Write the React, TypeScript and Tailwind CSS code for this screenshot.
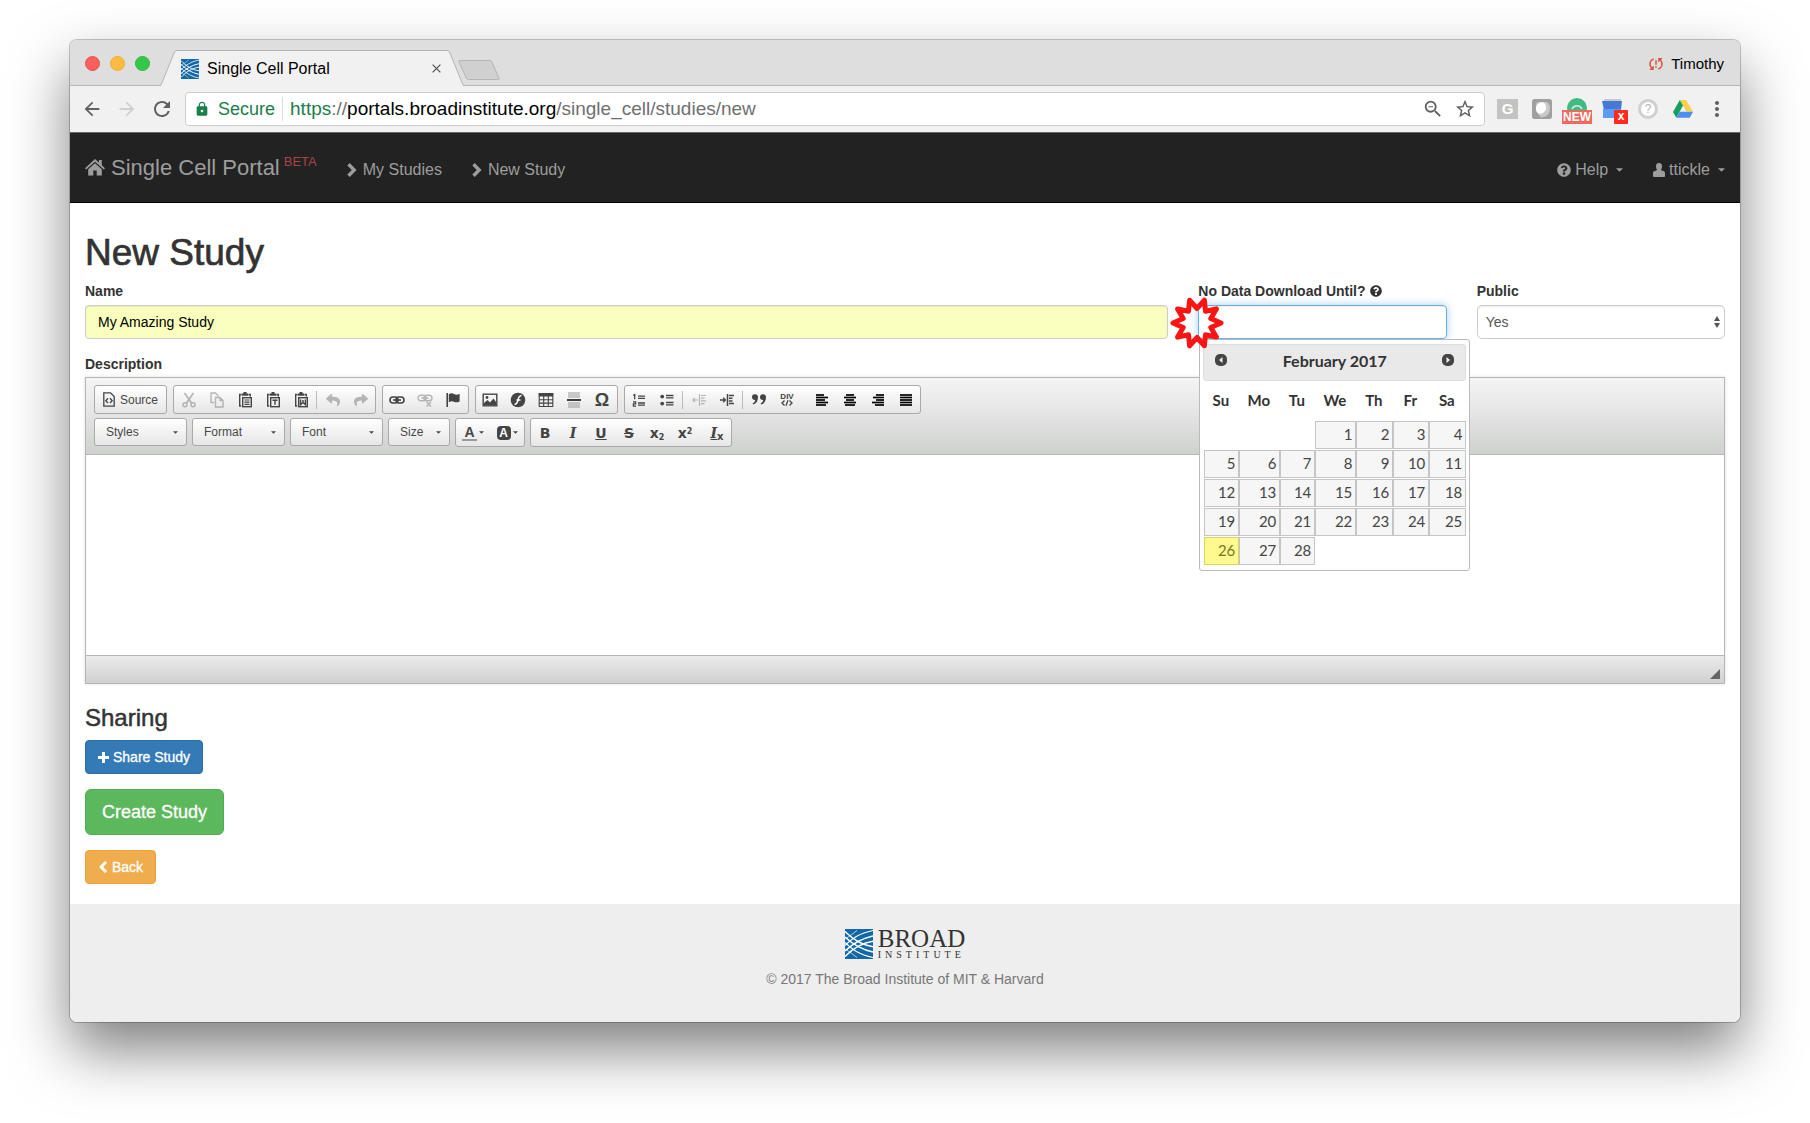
import React from "react";
import {
  MdArrowBack,
  MdArrowForward,
  MdRefresh,
  MdLock,
  MdZoomOut,
  MdStarBorder,
  MdMoreVert,
  MdSyncProblem,
} from "react-icons/md";
import { FaQuestionCircle, FaReply, FaShare } from "react-icons/fa";

/* ---------- logo and small drawings ---------- */

function BroadMark({ className }: { className: string }) {
  const fan = (
    <g fill="none" stroke="#fff" strokeLinecap="butt">
      <path d="M0 10 C5 7 8 4.5 12 1.5" strokeWidth="0.7" />
      <path d="M0 16.5 C7 9.5 14 4.5 28 1.5" strokeWidth="1.2" />
      <path d="M0 22 C8 14.5 16 9.5 28 7" strokeWidth="1.5" />
      <path d="M0 27.5 C8 19.5 16 14 28 12.3" strokeWidth="1.4" />
    </g>
  );
  return (
    <svg viewBox="0 0 28 30" preserveAspectRatio="none" className={className} aria-hidden="true">
      <rect width="28" height="30" fill="#1267a8" />
      {fan}
      <g transform="translate(0 30) scale(1 -1)">{fan}</g>
    </svg>
  );
}

function HomeIcon() {
  return (
    <svg viewBox="0 0 20 17" className="h-[17px] w-5" fill="currentColor" aria-hidden="true">
      <path d="M10 0 L0 9.2 L1.2 10.6 L10 2.8 L18.8 10.6 L20 9.2 L16.8 6.2 V1 H14 V3.6 Z" />
      <path d="M10 4.2 L3.2 10.2 V16.5 H8.3 V11.5 H11.7 V16.5 H16.8 V10.2 Z" />
    </svg>
  );
}

function UserIcon() {
  return (
    <svg viewBox="0 0 12 14" className="h-3.5 w-3" fill="currentColor" aria-hidden="true">
      <path d="M6 0 C8.2 0 9.2 1.6 9 3.8 C8.9 5.4 8.4 6.4 7.8 7 L10.8 8.2 C11.7 8.6 12 9.4 12 10.4 V12.8 C12 13.6 11.7 14 11 14 H1 C.3 14 0 13.6 0 12.8 V10.4 C0 9.4 .3 8.6 1.2 8.2 L4.2 7 C3.6 6.4 3.1 5.4 3 3.8 C2.8 1.6 3.8 0 6 0 Z" />
    </svg>
  );
}

function Chevron({ className, left = false }: { className: string; left?: boolean }) {
  return (
    <svg viewBox="0 0 10 14" className={className} fill="none" stroke="currentColor" strokeWidth="3.4" aria-hidden="true">
      <path d={left ? "M8.5 1.2 L2.8 7 L8.5 12.8" : "M1.5 1.2 L7.2 7 L1.5 12.8"} />
    </svg>
  );
}

function Caret({ className }: { className: string }) {
  return (
    <svg viewBox="0 0 8 4" className={className} fill="currentColor" aria-hidden="true">
      <path d="M0 0 H8 L4 4 Z" />
    </svg>
  );
}

const burst = Array.from({ length: 20 }, (_, i) => {
  const r = i % 2 === 0 ? 24 : 14.5;
  const a = (i * Math.PI) / 10;
  return `${(27 + r * Math.cos(a)).toFixed(1)},${(27 + r * Math.sin(a)).toFixed(1)}`;
}).join(" ");

/* ---------- browser chrome ---------- */

function TabStrip() {
  return (
    <div className="flex h-[46px] items-end border-b border-[#b9b9b9] bg-[#dedede] pr-4 pl-[15px]">
      <div className="flex gap-2.5 pb-3.5">
        <button aria-label="Close window" className="size-[15px] rounded-full border border-[#e9524c] bg-[#fc605c]" />
        <button aria-label="Minimise window" className="size-[15px] rounded-full border border-[#eeae35] bg-[#fdbc40]" />
        <button aria-label="Zoom window" className="size-[15px] rounded-full border border-[#2bb93d] bg-[#34c84a]" />
      </div>
      <div className="-mb-px ml-2.5 flex h-9 items-stretch">
        <svg viewBox="0 0 17 36" className="h-9 w-[17px]" aria-hidden="true">
          <path d="M0 36 L1 35.5 L14.5 2 Q15.3 .5 17 .5 V36 Z" fill="#f1f1f1" />
          <path d="M0 35.5 L1 35 L14.5 2 Q15.3 .5 17 .5" fill="none" stroke="#b4b4b4" />
        </svg>
        <div className="flex w-[270px] items-center border-t border-[#b4b4b4] bg-[#f1f1f1] pr-1.5 pl-1">
          <BroadMark className="h-5 w-[18px]" />
          <span className="ml-2 flex-1 text-base text-black">Single Cell Portal</span>
          <button aria-label="Close tab">
            <svg viewBox="0 0 10 10" className="size-[9px]" stroke="#555" strokeWidth="1.4" aria-hidden="true">
              <path d="M.7 .7 L9.3 9.3 M9.3 .7 L.7 9.3" />
            </svg>
          </button>
        </div>
        <svg viewBox="0 0 17 36" className="h-9 w-[17px]" aria-hidden="true">
          <path d="M17 36 L16 35.5 L2.5 2 Q1.7 .5 0 .5 V36 Z" fill="#f1f1f1" />
          <path d="M17 35.5 L16 35 L2.5 2 Q1.7 .5 0 .5" fill="none" stroke="#b4b4b4" />
        </svg>
      </div>
      <button aria-label="New tab" className="-ml-1.5 pb-[5px]">
        <svg viewBox="0 0 42 20" className="h-5 w-[42px]" aria-hidden="true">
          <path d="M2 .5 H32 Q33.5 .5 34 2 L41 18 Q41.5 19.5 40 19.5 H10.5 Q9 19.5 8.3 18 L1 2 Q.7 .5 2 .5 Z" fill="#d0d0d0" stroke="#b4b4b4" />
        </svg>
      </button>
      <button className="mb-2.5 ml-auto flex items-center gap-1.5 text-[15px] text-black">
        <MdSyncProblem className="size-[18px] text-[#d9533f]" />
        Timothy
      </button>
    </div>
  );
}

function Extensions() {
  return (
    <div className="ml-3 flex items-center">
      <button aria-label="G extension" className="flex h-5 w-[21px] items-center justify-center bg-[#c3c3c3] text-[15px] leading-5 font-bold text-white">
        G
      </button>
      <button aria-label="Shape extension" className="ml-3.5">
        <svg viewBox="0 0 20 20" className="size-5" aria-hidden="true">
          <rect width="20" height="20" rx="2.5" fill="#a0a0a0" />
          <path d="M4 6 Q4 3 7 3 H14 Q18 4 18 9 Q18 18 9 18.5 Q4 13 4 6 Z" fill="#c9c9c9" />
          <ellipse cx="9" cy="9" rx="5" ry="6" transform="rotate(25 9 9)" fill="#fff" />
        </svg>
      </button>
      <button aria-label="New extension" className="relative ml-2.5 h-6 w-[30px]">
        <svg viewBox="0 0 30 24" className="absolute top-0 left-0 h-6 w-[30px]" aria-hidden="true">
          <circle cx="15" cy="11" r="10" fill="#41bb86" />
          <path d="M10 12 A5.5 5.5 0 0 1 20 12" fill="none" stroke="#c9f0de" strokeWidth="1.6" />
        </svg>
        <span className="absolute bottom-[-3px] left-0 h-3.5 w-[30px] bg-[#ee6a5f] text-center text-[12px] leading-[14px] font-bold text-white">
          NEW
        </span>
      </button>
      <button aria-label="Mail extension" className="relative ml-2.5 h-6 w-[26px]">
        <svg viewBox="0 0 26 24" className="h-6 w-[26px]" aria-hidden="true">
          <path d="M2 2 H19 V5 H2 Z" fill="#c9c9c9" />
          <path d="M0 4 H20 L19 13 H2 Z" fill="#4679d6" />
          <path d="M1 12 H19 V21 H1 Z" fill="#5c9cf5" />
        </svg>
        <span className="absolute right-0 bottom-[-3px] size-3.5 rounded-[1px] bg-[#ff2a1c] text-center text-[12px] leading-3 font-bold text-white">
          x
        </span>
      </button>
      <button aria-label="Help extension" className="ml-2.5 flex size-5 items-center justify-center rounded-full border-[3px] border-[#cfcfcf] bg-white text-[12px] leading-3 text-[#b5b5b5]">
        ?
      </button>
      <button aria-label="Drive" className="ml-[15px]">
        <svg viewBox="0 0 20 18" className="h-[18px] w-5" aria-hidden="true">
          <path d="M6.8 0 H13.2 L20 11.8 H13.5 Z" fill="#fcd04b" />
          <path d="M6.8 0 L10 5.6 L3.3 17.8 L0 12 Z" fill="#12a05d" />
          <path d="M6.7 11.8 H20 L16.8 17.8 H3.3 Z" fill="#4e8df5" />
        </svg>
      </button>
      <button aria-label="Menu" className="ml-3">
        <MdMoreVert className="size-6 text-[#5f5f5f]" />
      </button>
    </div>
  );
}

function Toolbar() {
  return (
    <div className="flex h-[46px] items-center bg-[#f1f1f1] pr-[11px] pl-[11px]">
      <button aria-label="Back">
        <MdArrowBack className="size-[22px] text-[#606060]" />
      </button>
      <button aria-label="Forward" className="ml-[13px]">
        <MdArrowForward className="size-[22px] text-[#cfcfcf]" />
      </button>
      <button aria-label="Reload" className="ml-3">
        <MdRefresh className="size-6 text-[#606060]" />
      </button>
      <div className="ml-[11px] flex h-[34px] flex-1 items-center rounded-sm border border-[#cdcdcd] bg-white px-2">
        <MdLock className="size-4 text-[#188048]" />
        <span className="ml-2 text-lg text-[#188048]">Secure</span>
        <span className="mx-[7px] h-6 w-px bg-[#dcdcdc]" />
        <span className="flex-1 text-[19px] leading-6 text-[#6f6f6f]">
          <span className="text-[#188048]">https</span>://<span className="text-black">portals.broadinstitute.org</span>
          /single_cell/studies/new
        </span>
        <button aria-label="Zoom out">
          <MdZoomOut className="size-[22px] text-[#606060]" />
        </button>
        <button aria-label="Bookmark" className="ml-2.5">
          <MdStarBorder className="size-[22px] text-[#606060]" />
        </button>
      </div>
      <Extensions />
    </div>
  );
}

function Navbar() {
  return (
    <nav className="flex h-[71px] items-center border-y border-t-[#6a6a6a] border-b-black bg-[#222] px-[15px] pt-1 text-base text-[#9d9d9d]">
      <a href="#home" className="mb-1 flex items-center text-[22px] leading-7">
        <HomeIcon />
        <span className="ml-1.5">
          Single Cell Portal
          <sup className="top-[-9px] ml-1 text-[13px] text-[#a94442]">BETA</sup>
        </span>
      </a>
      <a href="#studies" className="ml-[30px] flex items-center gap-1.5">
        <Chevron className="h-3.5 w-2.5" />
        My Studies
      </a>
      <a href="#new" className="ml-[30px] flex items-center gap-1.5">
        <Chevron className="h-3.5 w-2.5" />
        New Study
      </a>
      <button className="ml-auto flex items-center">
        <FaQuestionCircle className="size-3.5" />
        <span className="mr-2 ml-1">Help</span>
        <Caret className="h-1 w-[7px]" />
      </button>
      <button className="ml-[30px] flex items-center">
        <UserIcon />
        <span className="mr-2 ml-1">ttickle</span>
        <Caret className="h-1 w-[7px]" />
      </button>
    </nav>
  );
}

/* ---------- date picker ---------- */

const weeks: (number | null)[][] = [
  [null, null, null, 1, 2, 3, 4],
  [5, 6, 7, 8, 9, 10, 11],
  [12, 13, 14, 15, 16, 17, 18],
  [19, 20, 21, 22, 23, 24, 25],
  [26, 27, 28, null, null, null, null],
];
const dayNames = ["Su", "Mo", "Tu", "We", "Th", "Fr", "Sa"];

function Arrow({ path, label }: { path: string; label: string }) {
  return (
    <button type="button" aria-label={label} className="-mt-0.5">
      <svg viewBox="0 0 12 12" className="size-3" aria-hidden="true">
        <rect width="12" height="12" rx="5" fill="#444" />
        <path d={path} fill="#eee" />
      </svg>
    </button>
  );
}

function DatePicker() {
  return (
    <div className="absolute top-full left-px z-10 w-[271px] rounded-[3px] border border-[#bbb] bg-white px-[3px] pt-1 pb-1 font-['Lato',sans-serif] text-[#333]">
      <div className="flex h-[37px] items-center justify-between rounded-[3px] border border-[#ddd] bg-[#e9e9e9] px-[11px] pb-[3px]">
        <Arrow label="Previous month" path="M7.5 3 V9 L4 6 Z" />
        <span className="text-base font-bold">February 2017</span>
        <Arrow label="Next month" path="M4.5 3 V9 L8 6 Z" />
      </div>
      <table className="ml-px w-[262px] table-fixed border-separate border-spacing-0 text-[15px]">
        <colgroup>
          <col className="w-[35px]" />
          <col className="w-[41px]" />
          <col className="w-[35px]" />
          <col className="w-[41px]" />
          <col className="w-[37px]" />
          <col className="w-9" />
          <col className="w-[37px]" />
        </colgroup>
        <thead>
          <tr className="h-10">
            {dayNames.map((d) => (
              <th key={d} scope="col" className="p-0 pr-0.5 font-bold">
                {d}
              </th>
            ))}
          </tr>
        </thead>
        <tbody>
          {weeks.map((w, i) => (
            <tr key={i}>
              {w.map((d, j) => (
                <td key={j} className="p-0 pb-px">
                  {d !== null && (
                    <button
                      type="button"
                      className={
                        d === 26
                          ? "block h-7 w-full border border-[#dad55e] bg-[#fffa90] pr-[3px] text-right text-[#777620]"
                          : "block h-7 w-full border border-[#c5c5c5] bg-[#f6f6f6] pr-[3px] text-right text-[#454545]"
                      }
                    >
                      {d}
                    </button>
                  )}
                </td>
              ))}
            </tr>
          ))}
        </tbody>
      </table>
    </div>
  );
}

/* ---------- rich text editor ---------- */

function Group({ children, className = "" }: { children: React.ReactNode; className?: string }) {
  return (
    <div className={"flex h-[29px] items-center rounded-[3px] border border-[#a9a9a9] bg-linear-to-b from-white to-[#e6e6e6] " + className}>
      {children}
    </div>
  );
}

function Tool({ label, off = false, children }: { label: string; off?: boolean; children: React.ReactNode }) {
  return (
    <button
      type="button"
      aria-label={label}
      disabled={off}
      className={"flex h-full w-7 items-center justify-center text-[#444] " + (off ? "opacity-35" : "")}
    >
      {children}
    </button>
  );
}

function Glyph({ children }: { children: React.ReactNode }) {
  return (
    <svg viewBox="0 0 16 16" className="size-4" fill="none" stroke="currentColor" strokeWidth="1.4" aria-hidden="true">
      {children}
    </svg>
  );
}

function Separator() {
  return <span className="mx-px h-[18px] w-0.5 border-l border-[#bbb]" />;
}

function Clipboard({ children }: { children: React.ReactNode }) {
  return (
    <Glyph>
      <path d="M4 2.5 H2.7 V14 H4.2 M12 2.5 H13.3 V4.5" />
      <path d="M4.5 1.5 H6.5 V0 H9.5 V1.5 H11.5 V3.8 H4.5 Z" fill="currentColor" stroke="none" />
      {children}
    </Glyph>
  );
}

function Lines({ rows }: { rows: [number, number][] }) {
  return (
    <svg viewBox="0 0 14 12" className="h-3 w-3.5 text-black" stroke="currentColor" strokeWidth="1.7" aria-hidden="true">
      {rows.map(([a, b], i) => (
        <path key={i} d={`M${a} ${1 + i * 2.5} H${b}`} />
      ))}
    </svg>
  );
}

function Combo({ label, className }: { label: string; className: string }) {
  return (
    <button
      type="button"
      className={"flex h-7 items-center justify-between rounded-[3px] border border-[#a9a9a9] bg-linear-to-b from-white to-[#e6e6e6] pr-2 pl-[11px] text-xs text-[#474747] " + className}
    >
      {label}
      <Caret className="h-[3px] w-[5px]" />
    </button>
  );
}

function Editor() {
  return (
    <div className="border border-[#b6b6b6] shadow-[0_0_3px_rgba(0,0,0,0.15)]">
      <div className="flex flex-col gap-1 border-b border-[#b6b6b6] bg-linear-to-b from-[#f5f5f5] to-[#cfd1cf] px-2 py-[7px]">
        <div className="flex flex-wrap gap-1.5">
          <Group>
            <button type="button" className="flex h-full items-center gap-[5px] px-2 text-xs text-[#474747]">
              <svg viewBox="0 0 12 15" className="h-[15px] w-3" fill="none" stroke="#444" strokeWidth="1.3" aria-hidden="true">
                <path d="M.8 .8 H7.5 L11.2 4.5 V14.2 H.8 Z" />
                <path d="M5 6.3 L2.8 8.7 L5 11 M7 6.3 L9.2 8.7 L7 11" />
              </svg>
              Source
            </button>
          </Group>
          <Group className="pl-px">
            <Tool label="Cut" off>
              <Glyph>
                <path d="M3.5 1 L10.5 11 M12.5 1 L5.5 11" strokeWidth="1.8" />
                <circle cx="4" cy="12.7" r="2" />
                <circle cx="12" cy="12.7" r="2" />
              </Glyph>
            </Tool>
            <Tool label="Copy" off>
              <Glyph>
                <path d="M5 10.5 H2 V1 H6.5 L9 3.5 V5" />
                <path d="M6.5 5.5 H11 L14 8.5 V15 H6.5 Z M11 5.5 V8.5 H14" />
              </Glyph>
            </Tool>
            <Tool label="Paste">
              <Clipboard>
                <rect x="5.7" y="5.7" width="8.6" height="9" />
                <path d="M7.5 8 H12.5 M7.5 10.2 H12.5 M7.5 12.4 H12.5" strokeWidth="1.2" />
              </Clipboard>
            </Tool>
            <Tool label="Paste as plain text">
              <Clipboard>
                <rect x="5.7" y="5.7" width="8.6" height="9" />
                <path d="M7.5 8.2 H12.5 M10 8.2 V12.8" />
              </Clipboard>
            </Tool>
            <Tool label="Paste from Word">
              <Clipboard>
                <rect x="5.7" y="5.7" width="8.6" height="9" />
                <path d="M7.6 7.5 V12.6 L10 10.5 L12.4 12.6 V7.5 M10 8 V10.5" />
              </Clipboard>
            </Tool>
            <Separator />
            <Tool label="Undo" off>
              <FaReply className="size-3.5" />
            </Tool>
            <Tool label="Redo" off>
              <FaShare className="size-3.5" />
            </Tool>
          </Group>
          <Group className="pr-px">
            <Tool label="Link">
              <Glyph>
                <rect x="1" y="5" width="8" height="6" rx="3" strokeWidth="1.6" />
                <rect x="7" y="5" width="8" height="6" rx="3" strokeWidth="1.6" />
                <path d="M4 8 H12" strokeWidth="1.6" />
              </Glyph>
            </Tool>
            <Tool label="Unlink" off>
              <Glyph>
                <rect x="1" y="3.2" width="8" height="5.6" rx="2.8" />
                <rect x="7" y="3.2" width="8" height="5.6" rx="2.8" />
                <path d="M4.5 6 H11.5 M9.5 10 L14 14.5 M14 10 L9.5 14.5" />
              </Glyph>
            </Tool>
            <Tool label="Anchor">
              <Glyph>
                <path d="M2.2 1 V15" strokeWidth="1.6" />
                <path d="M3.8 2.2 C6 .6 7.6 1.2 9 2 C10.8 3 12.6 2.8 14.6 1.8 V9.4 C12.6 10.6 10.6 10.6 9 9.8 C7.4 9 6 9 3.8 10.2 Z" fill="currentColor" stroke="none" />
              </Glyph>
            </Tool>
          </Group>
          <Group className="pr-px">
            <Tool label="Image">
              <Glyph>
                <rect x="1.2" y="2.2" width="13.6" height="11.6" />
                <path d="M2 13 V11 L5.5 8 L8 10.5 L11.5 6.5 L14 10 V13 Z" fill="currentColor" stroke="none" />
                <circle cx="5" cy="5.5" r="1.4" fill="currentColor" stroke="none" />
              </Glyph>
            </Tool>
            <Tool label="Flash">
              <Glyph>
                <circle cx="8" cy="8" r="7.3" fill="currentColor" stroke="none" />
                <path d="M11.5 3.5 Q8.8 3.8 8 8 Q7.2 12 4.5 12.4 M6.5 8 H10.5" stroke="#fff" />
              </Glyph>
            </Tool>
            <Tool label="Table">
              <Glyph>
                <path d="M.8 1 H15.2 V4.5 H.8 Z" fill="currentColor" stroke="none" />
                <path d="M1.2 1.5 H14.8 V14.5 H1.2 Z M5.7 4 V14.5 M10.3 4 V14.5 M1.2 7.7 H14.8 M1.2 11.1 H14.8" strokeWidth="1.1" />
              </Glyph>
            </Tool>
            <Tool label="Horizontal line">
              <Glyph>
                <path d="M2 1 H14 M2 3 H14 M2 5 H14 M2 11 H14 M2 13 H14 M2 15 H14" stroke="#999" strokeWidth="1" />
                <path d="M1 8 H15" stroke="#111" strokeWidth="1.6" />
              </Glyph>
            </Tool>
            <Tool label="Special character">
              <span className="text-[18px] leading-4 font-bold">Ω</span>
            </Tool>
          </Group>
          <Group>
            <Tool label="Numbered list">
              <Glyph>
                <path d="M7 4.2 H14 M7 6.4 H14 M7 11 H14 M7 13.2 H14" strokeWidth="1.3" />
                <path d="M2.3 3.4 L3.7 2.6 V7.2 M2 9.9 H4.6 V11.9 H2.4 V14.2 H5" strokeWidth="1.3" />
              </Glyph>
            </Tool>
            <Tool label="Bulleted list">
              <Glyph>
                <circle cx="3.2" cy="4.6" r="1.9" fill="currentColor" stroke="none" />
                <circle cx="3.2" cy="11.6" r="1.9" fill="currentColor" stroke="none" />
                <path d="M7 3.5 H14.5 M7 5.8 H14.5 M7 10.5 H14.5 M7 12.8 H14.5" strokeWidth="1.3" />
              </Glyph>
            </Tool>
            <Separator />
            <Tool label="Decrease indent" off>
              <Glyph>
                <path d="M8.5 2 V14 M10 3.5 H15 M10 6.2 H13.5 M10 8.9 H15 M10 11.6 H13.5" strokeWidth="1.2" />
                <path d="M7 8 H2 M4 5.8 L1.8 8 L4 10.2" strokeWidth="1.2" />
              </Glyph>
            </Tool>
            <Tool label="Increase indent">
              <Glyph>
                <path d="M8.5 2 V14 M10 3.5 H15 M10 6.2 H13.5 M10 8.9 H13.5 M10 11.6 H15" strokeWidth="1.5" />
                <path d="M1 8 H6 M4.2 5.8 L6.4 8 L4.2 10.2" strokeWidth="1.3" />
              </Glyph>
            </Tool>
            <Separator />
            <Tool label="Block quote">
              <Glyph>
                <g fill="currentColor" stroke="none">
                  <path d="M1 5.3 A3 3 0 0 1 7 5 C7 9 5.4 11.5 2.2 12.6 L1.6 11.4 C3.4 10.4 4.1 9.4 4.2 8 A3 3 0 0 1 1 5.3 Z" />
                  <path d="M9 5.3 A3 3 0 0 1 15 5 C15 9 13.4 11.5 10.2 12.6 L9.6 11.4 C11.4 10.4 12.1 9.4 12.2 8 A3 3 0 0 1 9 5.3 Z" />
                </g>
              </Glyph>
            </Tool>
            <Tool label="Div container">
              <span className="flex flex-col items-center text-[8px] leading-[7px] font-bold">
                <span>DIV</span>
                <svg viewBox="0 0 12 6" className="h-1.5 w-3" fill="none" stroke="currentColor" strokeWidth="1.3" aria-hidden="true">
                  <path d="M3.5 .5 L1 3 L3.5 5.5 M8.5 .5 L11 3 L8.5 5.5 M7 .3 L5 5.7" />
                </svg>
              </span>
            </Tool>
            <span className="w-[7px]" />
            <Tool label="Align left">
              <Lines rows={[[1, 9], [1, 13], [1, 10], [1, 13], [1, 11]]} />
            </Tool>
            <Tool label="Centre">
              <Lines rows={[[3, 11], [1, 13], [3, 11], [1, 13], [2, 12]]} />
            </Tool>
            <Tool label="Align right">
              <Lines rows={[[5, 13], [2, 13], [5, 13], [1, 13], [4, 13]]} />
            </Tool>
            <Tool label="Justify">
              <Lines rows={[[1, 13], [1, 13], [1, 13], [1, 13], [1, 13]]} />
            </Tool>
          </Group>
        </div>
        <div className="flex flex-wrap gap-[5px]">
          <Combo label="Styles" className="w-[93px]" />
          <Combo label="Format" className="w-[93px]" />
          <Combo label="Font" className="w-[93px]" />
          <Combo label="Size" className="w-[62px]" />
          <Group>
            <button type="button" aria-label="Text colour" className="flex h-full w-[34px] items-center justify-center gap-0.5 text-[#444]">
              <span className="border-b-2 border-[#999] px-0.5 text-[14px] leading-[14px] font-bold">A</span>
              <Caret className="h-[3px] w-[5px]" />
            </button>
            <button type="button" aria-label="Background colour" className="flex h-full w-[34px] items-center justify-center gap-0.5 text-[#444]">
              <span className="flex size-3.5 items-center justify-center rounded-sm bg-[#444] text-[12px] leading-3 font-bold text-white">A</span>
              <Caret className="h-[3px] w-[5px]" />
            </button>
          </Group>
          <Group className="font-['DejaVu_Sans','Liberation_Sans',sans-serif] text-[14px] font-bold">
            <Tool label="Bold">B</Tool>
            <Tool label="Italic">
              <span className="font-['DejaVu_Serif',serif] italic">I</span>
            </Tool>
            <Tool label="Underline">
              <span className="underline">U</span>
            </Tool>
            <Tool label="Strikethrough">
              <span className="line-through">S</span>
            </Tool>
            <Tool label="Subscript">
              <span>
                x<sub className="text-[8px]">2</sub>
              </span>
            </Tool>
            <Tool label="Superscript">
              <span>
                x<sup className="text-[8px]">2</sup>
              </span>
            </Tool>
            <span className="w-1" />
            <Tool label="Remove format">
              <span>
                <span className="font-['DejaVu_Serif',serif] italic underline">I</span>
                <sub className="text-[10px]">x</sub>
              </span>
            </Tool>
          </Group>
        </div>
      </div>
      <textarea id="description" className="block h-[200px] w-full resize-none bg-white outline-none" />
      <div className="flex h-7 items-end justify-end border-t border-[#b6b6b6] bg-linear-to-b from-[#ebebeb] to-[#cfd1cf] pr-1 pb-1">
        <svg viewBox="0 0 10 10" className="size-2.5" fill="#666" aria-hidden="true">
          <path d="M10 0 V10 H0 Z" />
        </svg>
      </div>
    </div>
  );
}

/* ---------- page ---------- */

function StudyForm() {
  return (
    <form className="px-[15px] pt-[30px] pb-5 text-sm text-[#333]" onSubmit={(e) => e.preventDefault()}>
      <h1 className="mb-[7px] text-[37px] leading-10 [-webkit-text-stroke:0.7px]">New Study</h1>
      <div className="grid grid-cols-12 gap-x-[30px]">
        <div className="col-span-8">
          <label htmlFor="name" className="mb-[3px] block leading-[22px] font-bold">
            Name
          </label>
          <input
            id="name"
            defaultValue="My Amazing Study"
            className="h-[34px] w-full rounded border border-[#ccc] bg-[#faffbd] px-3 text-black shadow-[inset_0_1px_1px_rgba(0,0,0,0.075)] outline-none"
          />
        </div>
        <div className="col-span-2">
          <label htmlFor="embargo" className="mb-[3px] flex items-center gap-1 leading-[22px] font-bold whitespace-nowrap">
            No Data Download Until?
            <FaQuestionCircle className="size-3" />
          </label>
          <div className="relative">
            <input
              id="embargo"
              className="block h-[34px] w-full rounded border border-[#66afe9] px-3 shadow-[inset_0_1px_1px_rgba(0,0,0,0.075),0_0_8px_rgba(102,175,233,0.6)] outline-none"
            />
            <DatePicker />
            <svg viewBox="0 0 54 54" className="absolute top-[-9px] left-[-28px] z-20 size-[54px]" aria-hidden="true">
              <polygon points={burst} fill="none" stroke="#fb1414" strokeWidth="5" strokeLinejoin="round" />
            </svg>
          </div>
        </div>
        <div className="col-span-2">
          <label htmlFor="public" className="mb-[3px] block leading-[22px] font-bold">
            Public
          </label>
          <div className="relative">
            <select
              id="public"
              className="h-[34px] w-full appearance-none rounded-[5px] border border-[#ccc] bg-white px-2 text-[#555] shadow-[inset_0_1px_1px_rgba(0,0,0,0.075)] outline-none"
            >
              <option>Yes</option>
              <option>No</option>
            </select>
            <svg viewBox="0 0 6 12" className="pointer-events-none absolute top-[11px] right-[5px] h-3 w-1.5" fill="#555" aria-hidden="true">
              <path d="M3 0 L6 5 H0 Z M3 12 L6 7 H0 Z" />
            </svg>
          </div>
        </div>
      </div>
      <label htmlFor="description" className="mt-3.5 mb-0.5 block leading-[22px] font-bold">
        Description
      </label>
      <Editor />
      <h3 className="mt-[21px] mb-[9px] text-2xl leading-[26px] [-webkit-text-stroke:0.5px]">Sharing</h3>
      <div className="flex flex-col items-start gap-[15px] text-white">
        <button type="button" className="flex h-[34px] items-center gap-1 rounded border border-[#2e6da4] bg-[#337ab7] px-3 [-webkit-text-stroke:0.3px]">
          <svg viewBox="0 0 12 12" className="size-[11px]" stroke="currentColor" strokeWidth="3.2" aria-hidden="true">
            <path d="M6 0 V12 M0 6 H12" />
          </svg>
          Share Study
        </button>
        <button type="submit" className="h-[46px] rounded-md border border-[#4cae4c] bg-[#5cb85c] px-4 text-lg [-webkit-text-stroke:0.3px]">
          Create Study
        </button>
        <a href="#back" className="flex h-[34px] items-center gap-1 rounded border border-[#eea236] bg-[#f0ad4e] px-3 [-webkit-text-stroke:0.3px]">
          <Chevron left className="h-3 w-2.5" />
          Back
        </a>
      </div>
    </form>
  );
}

function Footer() {
  return (
    <footer className="flex flex-col items-center bg-[#eee] pt-6 pb-8 text-sm text-[#777]">
      <div className="flex items-center gap-[5px]">
        <BroadMark className="h-[30px] w-7" />
        <div className="font-['Liberation_Serif',serif] text-[#333]">
          <div className="text-[25px] leading-[22px]">BROAD</div>
          <div className="text-[10px] leading-[10px] tracking-[0.4em]">INSTITUTE</div>
        </div>
      </div>
      <p className="mt-2 leading-[22px]">© 2017 The Broad Institute of MIT &amp; Harvard</p>
    </footer>
  );
}

export default function App() {
  return (
    <div className="min-h-screen bg-white px-[70px] pt-10 pb-[100px] font-['Liberation_Sans',Arial,sans-serif]">
      <div className="overflow-hidden rounded-[7px] bg-white shadow-[0_0_0_1px_rgba(0,0,0,0.22),0_28px_58px_rgba(0,0,0,0.5)]">
        <TabStrip />
        <Toolbar />
        <Navbar />
        <StudyForm />
        <Footer />
      </div>
    </div>
  );
}
